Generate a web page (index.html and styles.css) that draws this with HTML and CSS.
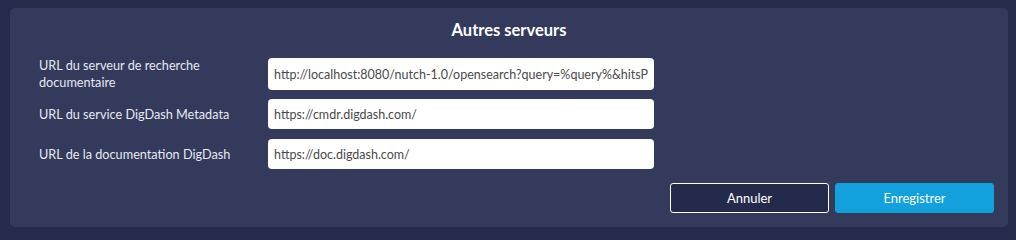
FILE: index.html
```html
<!DOCTYPE html>
<html lang="fr">
<head>
<meta charset="utf-8">
<link rel="stylesheet" href="styles.css">
</head>
<body>
<div class="panel">
  <h2 class="title">Autres serveurs</h2>
  <div class="rows">
    <div class="row">
      <label class="label">URL du serveur de recherche documentaire</label>
      <input class="field" type="text" value="http://localhost:8080/nutch-1.0/opensearch?query=%query%&amp;hitsPerPage=10">
    </div>
    <div class="row">
      <label class="label">URL du service DigDash Metadata</label>
      <input class="field" type="text" value="https://cmdr.digdash.com/">
    </div>
    <div class="row">
      <label class="label">URL de la documentation DigDash</label>
      <input class="field" type="text" value="https://doc.digdash.com/">
    </div>
  </div>
  <div class="actions">
    <button class="btn btn-cancel">Annuler</button>
    <button class="btn btn-save">Enregistrer</button>
  </div>
</div>
</body>
</html>
```
FILE: styles.css
```css
html, body {
  margin: 0;
  padding: 0;
  background: #242b4b;
  height: 100%;
}
body {
  padding: 8px 8px 0 10px;
  box-sizing: border-box;
  font-family: "Lato", "Noto Sans", sans-serif;
}
.panel {
  width: 998px;
  height: 219px;
  background: #343a5c;
  border-radius: 5px;
  box-sizing: border-box;
  padding: 10px 14px 0 29px;
}
.title {
  margin: 0 0 0 -15px;
  text-align: center;
  color: #ffffff;
  font-size: 16.5px;
  font-weight: 700;
  line-height: 24px;
}
.rows {
  margin-top: 16px;
  display: flex;
  flex-direction: column;
  gap: 8px;
}
.row {
  display: flex;
  align-items: center;
  height: 32px;
}
.label {
  width: 229px;
  color: #e6e8f0;
  font-size: 12.7px;
  line-height: 17px;
  padding-right: 20px;
  box-sizing: border-box;
}
.row + .row .field {
  height: 30px;
}
.field {
  width: 386px;
  height: 32px;
  box-sizing: border-box;
  border: none;
  border-radius: 4px;
  background: #ffffff;
  padding: 0 6px;
  font-family: inherit;
  font-size: 12.5px;
  color: #4a4a4a;
  outline: none;
}
.actions {
  display: flex;
  justify-content: flex-end;
  gap: 6px;
  margin-top: 13px;
}
.btn {
  width: 159px;
  height: 30px;
  box-sizing: border-box;
  border-radius: 3px;
  font-family: inherit;
  font-size: 13px;
  color: #ffffff;
  cursor: pointer;
}
.btn-cancel {
  background: #232a4b;
  border: 1px solid #ffffff;
}
.btn-save {
  background: #12a1dc;
  border: 1px solid #12a1dc;
}
```
